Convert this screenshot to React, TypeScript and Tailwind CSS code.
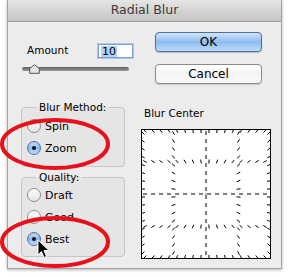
import React from 'react'

const FONT = { fontFamily: '"DejaVu Sans", "Liberation Sans", sans-serif' }

// radial dash pattern for the blur center preview
const C = 65
const LINES = [2, 32.5, 65, 97.5, 128]
type Seg = { x1: number; y1: number; x2: number; y2: number }
function buildDashes(): Seg[] {
  const out: Seg[] = []
  const add = (x: number, y: number) => {
    const dx = x - C
    const dy = y - C
    const len = Math.hypot(dx, dy)
    if (len < 1) return
    const ux = (dx / len) * 2
    const uy = (dy / len) * 2
    out.push({ x1: x - ux, y1: y - uy, x2: x + ux, y2: y + uy })
  }
  for (const l of LINES) {
    for (let t = 4; t <= 126; t += 8) {
      add(l, t)
      add(t, l)
    }
  }
  return out
}
const DASHES = buildDashes()

function Radio({ label, checked }: { label: string; checked?: boolean }) {
  return (
    <div className="flex items-center h-[22px] pl-[5px]">
      {checked ? (
        <span className="w-[14px] h-[14px] rounded-full border border-[#4f72a6] bg-gradient-to-b from-[#d3e5fb] via-[#8ab8ee] to-[#c4defc] flex items-center justify-center shadow-[inset_0_1px_1px_rgba(0,0,0,0.15)]">
          <span className="w-[4px] h-[4px] rounded-full bg-[#111]" />
        </span>
      ) : (
        <span className="w-[14px] h-[14px] rounded-full border border-[#8e8e8e] bg-gradient-to-b from-[#ffffff] via-[#f1f1f1] to-[#e2e2e2]" />
      )}
      <span className="ml-[4px] text-[11px] text-black leading-none">{label}</span>
    </div>
  )
}

function Group({ title, children, className }: { title: string; children: React.ReactNode; className?: string }) {
  return (
    <fieldset className={`border border-[#c6c6c6] rounded-[4px] bg-[#e5e5e5] w-[104px] ${className ?? ''}`}>
      <legend className="ml-[14px] px-[3px] text-[10.5px] leading-[13px] text-black">{title}</legend>
      {children}
    </fieldset>
  )
}

export default function App() {
  return (
    <div className="relative w-[289px] h-[277px] bg-white overflow-hidden" style={FONT}>
      <div className="ml-[7px] w-[275px] h-[269px] bg-[#ececec] border-x border-b border-[#a3a3a3] shadow-[0_1px_3px_rgba(0,0,0,0.3)] flex flex-col">
        {/* Title bar */}
        <div className="h-[22px] flex items-center justify-center bg-gradient-to-b from-[#e6e6e6] to-[#c4c4c4] border-b border-[#a0a0a0]">
          <span className="text-[12.5px] text-[#3a3a3a]">Radial Blur</span>
        </div>

        <div className="flex pt-[10px] pl-[13px]">
          {/* Left column */}
          <div className="flex flex-col w-[110px]">
            <div className="flex items-center h-[14px] mt-[12px]">
              <span className="ml-[6px] text-[10.5px] text-black">Amount</span>
              <div className="ml-auto mr-[-2px] w-[35px] h-[14px] border border-[#7d9fcf] shadow-[0_0_0_1px_#a9c6ec] bg-white flex items-center pl-[2px]">
                <span className="bg-[#b3d1f8] text-[11px] leading-[11px] px-[1px] text-black">10</span>
              </div>
            </div>
            <div className="relative h-[10px] mt-[6px] flex items-center">
              <div className="ml-[1px] w-[107px] h-[4px] rounded-full bg-gradient-to-b from-[#5f5f5f] to-[#9a9a9a]" />
              <svg className="absolute left-[8px] top-0" width="11" height="10" viewBox="0 0 11 10">
                <path d="M5.5 0.7 L10.3 4.5 L10.3 9.3 L0.7 9.3 L0.7 4.5 Z" fill="#e4e4e4" stroke="#555" strokeWidth="1" />
              </svg>
            </div>

            <Group title="Blur Method:" className="mt-[27px]">
              <div className="pt-[1px] pb-[7px]">
                <Radio label="Spin" />
                <Radio label="Zoom" checked />
              </div>
            </Group>

            <Group title="Quality:" className="mt-[4px]">
              <div className="pb-[6px]">
                <Radio label="Draft" />
                <Radio label="Good" />
                <Radio label="Best" checked />
              </div>
            </Group>
          </div>

          {/* Right column */}
          <div className="flex flex-col ml-[10px]">
            <button className="ml-[14px] w-[107px] h-[20px] rounded-[4px] border border-[#4a6ea3] bg-gradient-to-b from-[#d2e4fa] via-[#8dbbf0] to-[#bcdcfd] text-[12px] text-black leading-none shadow-[0_1px_1px_rgba(0,0,0,0.2)]">
              OK
            </button>
            <button className="ml-[14px] mt-[12px] w-[107px] h-[20px] rounded-[4px] border border-[#8a8a8a] bg-gradient-to-b from-white via-[#f3f3f3] to-[#fbfbfb] text-[12px] text-black leading-none shadow-[0_1px_1px_rgba(0,0,0,0.15)]">
              Cancel
            </button>
            <span className="ml-[3px] mt-[23px] text-[10.5px] leading-[13px] text-black">Blur Center</span>
            <div className="mt-[9px] w-[130px] h-[130px] border border-black bg-white">
              <svg width="128" height="128" viewBox="1 1 128 128">
                {DASHES.map((d, i) => (
                  <line key={i} x1={d.x1} y1={d.y1} x2={d.x2} y2={d.y2} stroke="#000" strokeWidth="1" />
                ))}
                <rect x="64.5" y="64.5" width="1" height="1" fill="#000" />
              </svg>
            </div>
          </div>
        </div>
      </div>

      {/* annotation overlay: red circles and mouse pointer */}
      <svg className="absolute left-0 top-0 pointer-events-none" width="289" height="277" viewBox="0 0 289 277">
        <ellipse cx="55" cy="144" rx="53" ry="24" fill="none" stroke="#e8101a" strokeWidth="4" />
        <ellipse cx="55" cy="242" rx="53" ry="24" fill="none" stroke="#e8101a" strokeWidth="4" />
        <path
          d="M38 240 L38 255 L41.5 251.5 L44 257.5 L46.5 256.5 L44 250.5 L49 250.5 Z"
          fill="#000"
          stroke="#fff"
          strokeWidth="1"
          strokeLinejoin="round"
        />
      </svg>
    </div>
  )
}
